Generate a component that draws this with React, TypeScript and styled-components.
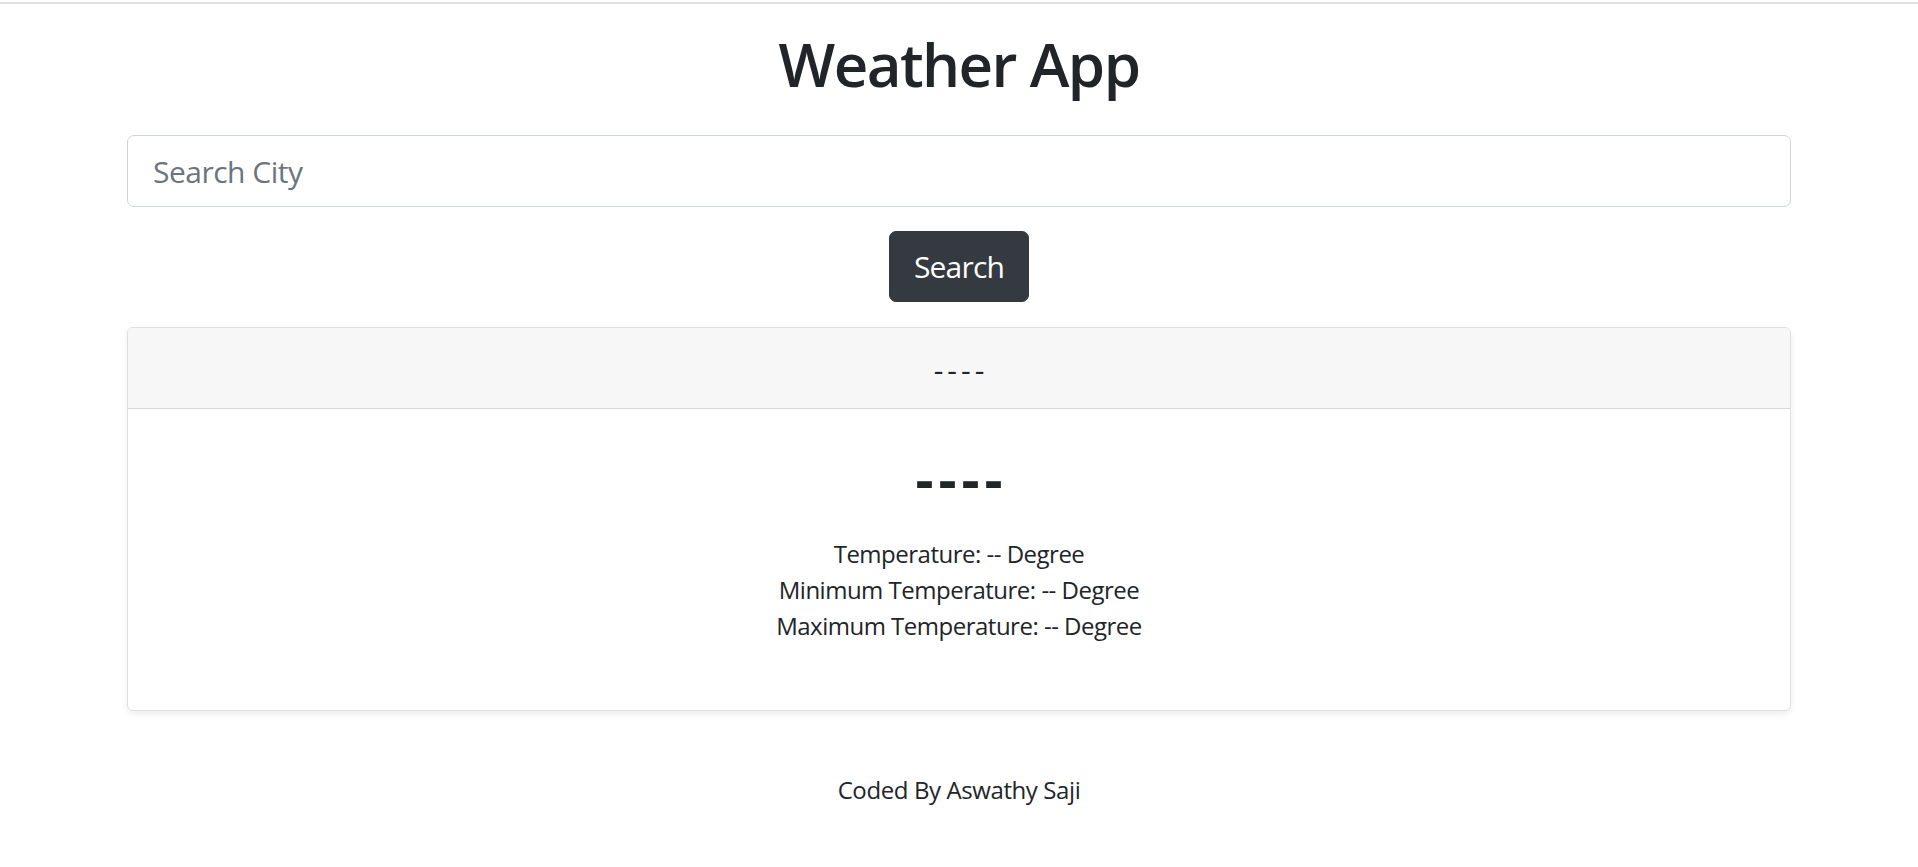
import React from "react";
import styled, { createGlobalStyle } from "styled-components";

const GlobalStyle = createGlobalStyle`
  html, body {
    margin: 0;
    padding: 0;
    background: #ffffff;
  }
  body {
    font-family: "Open Sans", "Noto Sans", "Liberation Sans", sans-serif;
    color: #212529;
  }
  * { box-sizing: border-box; }
`;

const Page = styled.div`
  padding-top: 2px;
`;

const TopRule = styled.div`
  height: 2px;
  background: #e2e2e2;
`;

const Container = styled.main`
  width: 1710px;
  margin: 0 auto;
  padding: 0 23px;
  display: flex;
  flex-direction: column;
  align-items: center;
`;

const Title = styled.h1`
  margin: 24px 0 35px;
  font-size: 60px;
  line-height: 72px;
  font-weight: 600;
  letter-spacing: -1.6px;
  color: #212529;
`;

const SearchInput = styled.input`
  width: 100%;
  height: 72px;
  padding: 0 25px;
  font-family: inherit;
  font-size: 30px;
  letter-spacing: -0.5px;
  color: #495057;
  border: 1.5px solid #ced4da;
  border-radius: 7px;
  outline: none;
  background: #fff;
  &::placeholder {
    color: #6c757d;
  }
`;

const SearchButton = styled.button`
  margin-top: 24px;
  height: 71px;
  padding: 0 24px;
  font-family: inherit;
  font-size: 30px;
  letter-spacing: -0.8px;
  color: #ffffff;
  background: #343a40;
  border: 1.5px solid #343a40;
  border-radius: 7px;
  cursor: pointer;
`;

const Card = styled.section`
  width: 100%;
  margin-top: 25px;
  border: 1.5px solid rgba(0, 0, 0, 0.125);
  border-radius: 6px;
  box-shadow: 0 3px 6px rgba(0, 0, 0, 0.075);
  overflow: hidden;
`;

const CardHeader = styled.header`
  height: 81px;
  display: flex;
  align-items: center;
  justify-content: center;
  background: #f7f7f7;
  border-bottom: 1.5px solid rgba(0, 0, 0, 0.125);
  font-size: 30px;
  font-weight: 400;
  letter-spacing: 4px;
  padding: 2px 0 0 4px;
`;

const CardBody = styled.div`
  padding: 39px 30px 66px;
  display: flex;
  flex-direction: column;
  align-items: center;
`;

const City = styled.div`
  font-size: 56px;
  line-height: 60px;
  font-weight: 700;
  letter-spacing: 5px;
  padding-left: 5px;
  margin-bottom: 28px;
`;

const InfoLine = styled.p`
  margin: 0;
  font-size: 24px;
  line-height: 36px;
  letter-spacing: -0.5px;
`;

const Footer = styled.footer`
  margin-top: 61px;
  font-size: 24px;
  line-height: 36px;
  letter-spacing: -0.4px;
  text-align: center;
`;

export default function App() {
  return (
    <Page>
      <GlobalStyle />
      <TopRule />
      <Container>
        <Title>Weather App</Title>
        <SearchInput placeholder="Search City" />
        <SearchButton>Search</SearchButton>
        <Card>
          <CardHeader>----</CardHeader>
          <CardBody>
            <City>----</City>
            <InfoLine>Temperature: -- Degree</InfoLine>
            <InfoLine>Minimum Temperature: -- Degree</InfoLine>
            <InfoLine>Maximum Temperature: -- Degree</InfoLine>
          </CardBody>
        </Card>
        <Footer>Coded By Aswathy Saji</Footer>
      </Container>
    </Page>
  );
}
